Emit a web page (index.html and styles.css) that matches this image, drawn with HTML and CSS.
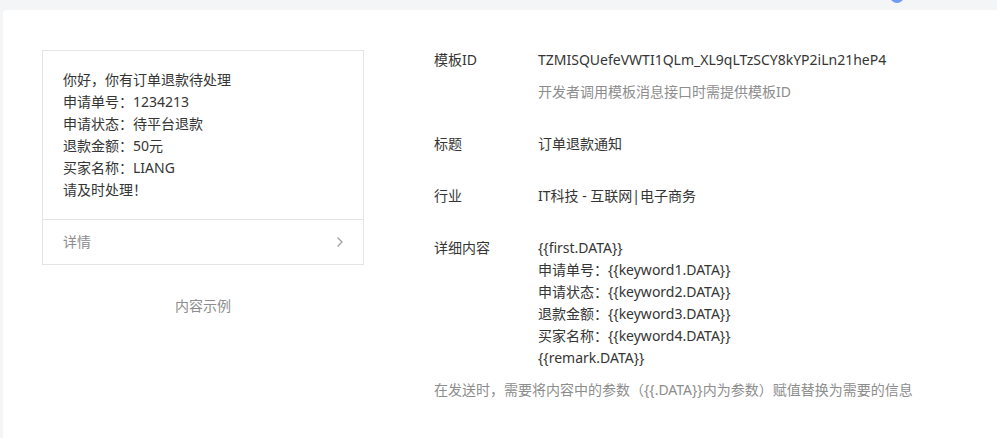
FILE: index.html
```html
<!DOCTYPE html>
<html lang="zh-CN">
<head>
    <meta charset="UTF-8">
    <meta name="viewport" content="width=device-width, initial-scale=1.0">
    <title>模板详情</title>
    <link rel="stylesheet" href="styles.css">
</head>
<body>

<div class="topbar">
    <span class="avatar"></span>
</div>

<div class="panel">
    <div class="preview">
        <div class="card">
            <div class="card-body">
                <p>你好，你有订单退款待处理</p>
                <p>申请单号：1234213</p>
                <p>申请状态：待平台退款</p>
                <p>退款金额：50元</p>
                <p>买家名称：LIANG</p>
                <p>请及时处理！</p>
            </div>
            <div class="card-foot">
                <span>详情</span>
                <svg class="arrow" width="8" height="12" viewBox="0 0 8 12">
                    <polyline points="1.5,1.5 6,6 1.5,10.5" fill="none" stroke="#a0a0a0" stroke-width="1.3"/>
                </svg>
            </div>
        </div>
        <div class="preview-tip">内容示例</div>
    </div>

    <div class="info">
        <div class="row">
            <div class="label">模板ID</div>
            <div class="value">
                <div>TZMISQUefeVWTI1QLm_XL9qLTzSCY8kYP2iLn21heP4</div>
                <div class="desc">开发者调用模板消息接口时需提供模板ID</div>
            </div>
        </div>
        <div class="row">
            <div class="label">标题</div>
            <div class="value">订单退款通知</div>
        </div>
        <div class="row">
            <div class="label">行业</div>
            <div class="value">IT科技 - 互联网|电子商务</div>
        </div>
        <div class="row row-last">
            <div class="label">详细内容</div>
            <div class="value">
                <div>{{first.DATA}}</div>
                <div>申请单号：{{keyword1.DATA}}</div>
                <div>申请状态：{{keyword2.DATA}}</div>
                <div>退款金额：{{keyword3.DATA}}</div>
                <div>买家名称：{{keyword4.DATA}}</div>
                <div>{{remark.DATA}}</div>
            </div>
        </div>
        <div class="note">在发送时，需要将内容中的参数（{{.DATA}}内为参数）赋值替换为需要的信息</div>
    </div>
</div>

</body>
</html>
```

FILE: styles.css
```css
html, body {
    height: 100%;
}
body {
    margin: 0;
    background-color: #f4f5f7;
    font-family: "Noto Sans", "Noto Sans CJK SC", sans-serif;
    font-size: 14px;
    line-height: 22px;
    color: #353535;
    overflow: hidden;
}
p {
    margin: 0;
}
.topbar {
    height: 10px;
    display: flex;
    justify-content: flex-end;
    padding-right: 93px;
    overflow: hidden;
}
.avatar {
    width: 14px;
    height: 14px;
    margin-top: -11px;
    border-radius: 50%;
    background-color: #6f9cf3;
}
.panel {
    margin-left: 3px;
    height: calc(100% - 10px);
    box-sizing: border-box;
    background-color: #fff;
    border-top-left-radius: 4px;
    padding: 40px 0 0 39px;
    display: flex;
}
.preview {
    width: 322px;
    flex: none;
}
.card {
    border: 1px solid #e4e4e4;
    box-sizing: border-box;
}
.card-body {
    padding: 18px 20px 18px;
}
.card-foot {
    border-top: 1px solid #e4e4e4;
    height: 44px;
    padding: 0 19px 0 20px;
    display: flex;
    align-items: center;
    justify-content: space-between;
    color: #8d8d8d;
}
.preview-tip {
    margin-top: 30px;
    text-align: center;
    color: #8d8d8d;
}
.info {
    margin-left: 70px;
    margin-top: -1px;
}
.row {
    display: flex;
    margin-bottom: 30px;
}
.row-last {
    margin-bottom: 10px;
}
.label {
    width: 104px;
    flex: none;
}
.desc {
    margin-top: 10px;
    color: #8d8d8d;
}
.note {
    color: #8d8d8d;
}
```
